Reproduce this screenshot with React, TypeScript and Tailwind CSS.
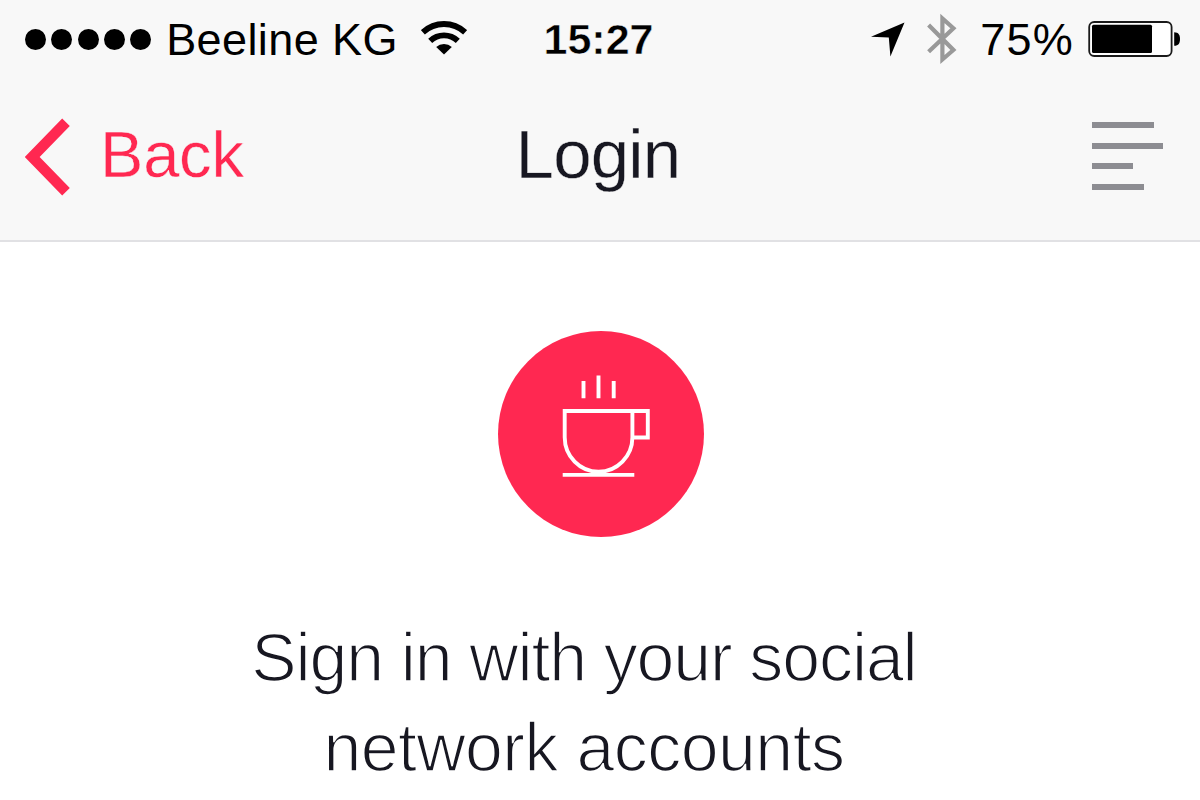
const MENU_BARS = ["w-[62px]", "w-[71px]", "w-[41px]", "w-[52px]"];

function SignalDots() {
  return (
    <div className="flex gap-[5.3px]">
      {[0, 1, 2, 3, 4].map((dot) => (
        <span key={dot} className="size-[21px] rounded-full bg-black" />
      ))}
    </div>
  );
}

function WifiIcon() {
  return (
    <svg width="46" height="34" viewBox="0 0 46 34" fill="none" stroke="#000">
      <path d="M1.9 11.3A31 31 0 0 1 44.1 11.3" strokeWidth="5.8" />
      <path d="M9.2 19.8A20 20 0 0 1 36.8 19.8" strokeWidth="5.8" />
      <path d="M15.2 26A11.5 11.5 0 0 1 30.8 26L23 33.6Z" fill="#000" stroke="none" />
    </svg>
  );
}

function LocationIcon() {
  return (
    <svg width="34" height="35" viewBox="0 0 34 35">
      <path d="M0 14.8L33.5 0.6L19.4 34.6L17.8 15.6Z" fill="#000" />
    </svg>
  );
}

function BluetoothIcon() {
  return (
    <svg width="30" height="52" viewBox="0 0 30 52" fill="none" stroke="#999" strokeWidth="4.2">
      <path d="M1.6 12L26.4 37L15.4 46.5V5.5L26.4 15.3L1.6 38.8" />
    </svg>
  );
}

function BatteryIcon() {
  return (
    <svg width="92" height="36" viewBox="0 0 92 36">
      <rect x="1.2" y="1" width="82.4" height="34" rx="5" fill="#fff" stroke="#1a1a1a" strokeWidth="1.8" />
      <rect x="4" y="3.8" width="60" height="28.2" rx="1.5" fill="#000" />
      <path d="M86.2 11.2C90.6 11.2 92 14 92 18S90.6 24.8 86.2 24.8Z" fill="#000" />
    </svg>
  );
}

function StatusBar() {
  return (
    <div className="relative flex h-[79px] items-center justify-between whitespace-nowrap pr-5 pl-[25px] text-[45px] leading-none text-black">
      <div className="flex items-center">
        <SignalDots />
        <span className="ml-[15px] tracking-[0.4px]">Beeline KG</span>
        <span className="-mt-1 ml-[23px]">
          <WifiIcon />
        </span>
      </div>
      <span className="absolute left-[543.5px] text-[43px] font-bold [-webkit-text-stroke:0.5px_#f8f8f8]">
        15:27
      </span>
      <div className="flex items-center">
        <LocationIcon />
        <span className="-mt-[2px] ml-[22px]">
          <BluetoothIcon />
        </span>
        <span className="ml-[23px] tracking-[1.2px]">75%</span>
        <span className="-mt-[2px] ml-[14px]">
          <BatteryIcon />
        </span>
      </div>
    </div>
  );
}

function NavBar() {
  return (
    <div className="grid h-[152px] grid-cols-[1fr_auto_1fr] items-center pr-[37px] pl-[25px]">
      <button className="flex items-center text-[#ff2851]">
        <svg className="mt-1" width="46" height="78" viewBox="0 0 46 78" fill="none">
          <path d="M41 4.2L7.2 39L41 73.8" stroke="currentColor" strokeWidth="10.6" />
        </svg>
        <span className="-mt-[2px] ml-[29px] text-[65px] leading-none tracking-[-0.2px] [-webkit-text-stroke:0.4px_#f8f8f8]">
          Back
        </span>
      </button>
      <h1 className="-mt-[2px] ml-[8px] text-[69px] leading-none tracking-[-0.8px] text-[#171721] [-webkit-text-stroke:0.4px_#f8f8f8]">
        Login
      </h1>
      <div className="mt-[2px] flex w-[71px] flex-col gap-[14.6px] justify-self-end">
        {MENU_BARS.map((width) => (
          <span key={width} className={`h-[6px] bg-[#8d8d92] ${width}`} />
        ))}
      </div>
    </div>
  );
}

function CupBadge() {
  return (
    <div className="ml-px size-[206px] rounded-full bg-[#ff2851]">
      <svg width="206" height="206" viewBox="0.5 0 206 206" fill="none" stroke="#fff" strokeWidth="3.9">
        <path d="M86 50V67.3M101 44.5V67.3M116.2 50V67.3" />
        <path d="M67.2 80H134.9V106.2A33.85 34.5 0 0 1 67.2 106.2Z" />
        <path d="M134.9 80H150.3V106.5H134.9" />
        <path d="M65.2 143.9H136.8" />
      </svg>
    </div>
  );
}

function App() {
  return (
    <div className="h-[800px] w-[1200px] overflow-hidden bg-white font-['Liberation_Sans',Arial,sans-serif]">
      <header className="h-[242px] border-b-2 border-[#e1e1e4] bg-[#f8f8f8]">
        <StatusBar />
        <NavBar />
      </header>

      <main className="flex flex-col items-center pt-[89px]">
        <CupBadge />
        <p className="mt-[75px] mr-8 flex flex-col items-center whitespace-nowrap text-[68px] leading-[90px] text-[#171721] [-webkit-text-stroke:1.6px_#fff]">
          <span className="tracking-[-1.1px]">Sign in with your social</span>
          <span className="tracking-[-0.5px]">network accounts</span>
        </p>
      </main>
    </div>
  );
}

export default App;
